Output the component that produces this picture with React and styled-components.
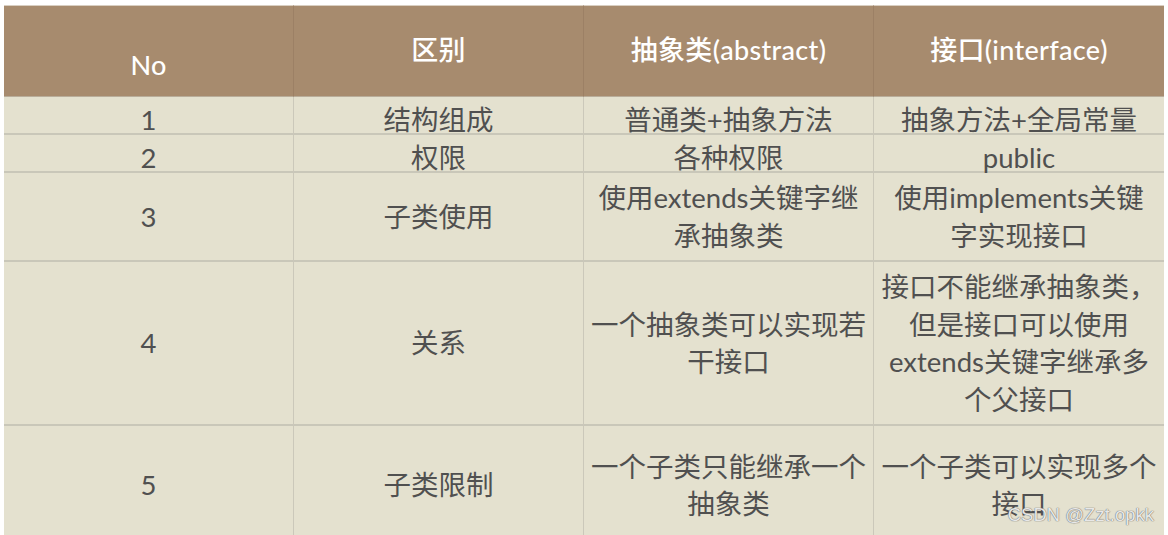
import React from 'react';
import styled, { createGlobalStyle } from 'styled-components';

const GlobalStyle = createGlobalStyle`
  body {
    margin: 0;
    background: #ffffff;
    font-family: Lato, "Noto Sans CJK SC", sans-serif;
  }
`;

/* 페이지 */
const Page = styled.div`
  position: relative;
  width: 1168px;
  height: 535px;
  overflow: hidden;
  padding: 5px 0 0 4px;
  box-sizing: border-box;
`;

/* 표 */
const Table = styled.div`
  display: grid;
  grid-template-columns: repeat(4, 290px);
  grid-template-rows: 92px 38px 38px 89px 164px 120px;
  width: 1160px;
  background-color: #e4e1cf;
`;

const HeadCell = styled.div`
  display: flex;
  align-items: center;
  justify-content: center;
  box-sizing: border-box;
  padding-top: ${(p) => (p.$low ? '26px' : '0')};
  padding-bottom: ${(p) => (p.$low ? '0' : '6px')};
  background-color: #a78b6e;
  border-top: 1px solid #d9cfc2;
  border-right: ${(p) => (p.$last ? 'none' : '1px solid #9c8065')};
  border-bottom: 1px solid #b9ad9a;
  color: #ffffff;
  font-size: 27px;
  font-weight: 500;
  letter-spacing: 0.3px;
`;

const Cell = styled.div`
  display: flex;
  align-items: center;
  justify-content: center;
  box-sizing: border-box;
  padding: ${(p) => (p.$low ? '9px 4px 0' : '0 4px')};
  border-right: ${(p) => (p.$last ? 'none' : '1px solid #cbc8ba')};
  border-bottom: 2px solid #c9c7b9;
  color: #505050;
  font-size: 27.5px;
  line-height: 37.5px;
  text-align: center;
`;

const Watermark = styled.div`
  position: absolute;
  right: 14px;
  bottom: 9px;
  font-family: "Liberation Sans", Arial, sans-serif;
  font-size: 18.5px;
  color: rgba(255, 255, 255, 0.85);
  text-shadow: 0 0 1px #6b6b6b, 0 0 1px #6b6b6b;
`;

const heads = ['No', '区别', '抽象类(abstract)', '接口(interface)'];

const rows = [
  ['1', '结构组成', ['普通类+抽象方法'], ['抽象方法+全局常量']],
  ['2', '权限', ['各种权限'], ['public']],
  ['3', '子类使用', ['使用extends关键字继', '承抽象类'], ['使用implements关键', '字实现接口']],
  [
    '4',
    '关系',
    ['一个抽象类可以实现若', '干接口'],
    ['接口不能继承抽象类，', '但是接口可以使用', 'extends关键字继承多', '个父接口'],
  ],
  ['5', '子类限制', ['一个子类只能继承一个', '抽象类'], ['一个子类可以实现多个', '接口']],
];

function Lines({ lines }) {
  return (
    <span>
      {lines.map((l, i) => (
        <React.Fragment key={i}>
          {i > 0 && <br />}
          {l}
        </React.Fragment>
      ))}
    </span>
  );
}

export default function App() {
  return (
    <Page>
      <GlobalStyle />
      <Table>
        {heads.map((h, i) => (
          <HeadCell key={h} $low={i === 0} $last={i === 3}>
            {h}
          </HeadCell>
        ))}
        {rows.map((r, i) => {
          const low = i < 2; // 1, 2행은 글자가 아래쪽에 붙어 있음
          return (
            <React.Fragment key={r[0]}>
              <Cell $low={low}>{r[0]}</Cell>
              <Cell $low={low}>{r[1]}</Cell>
              <Cell $low={low}>
                <Lines lines={r[2]} />
              </Cell>
              <Cell $low={low} $last>
                <Lines lines={r[3]} />
              </Cell>
            </React.Fragment>
          );
        })}
      </Table>
      <Watermark>CSDN @Zzt.opkk</Watermark>
    </Page>
  );
}
